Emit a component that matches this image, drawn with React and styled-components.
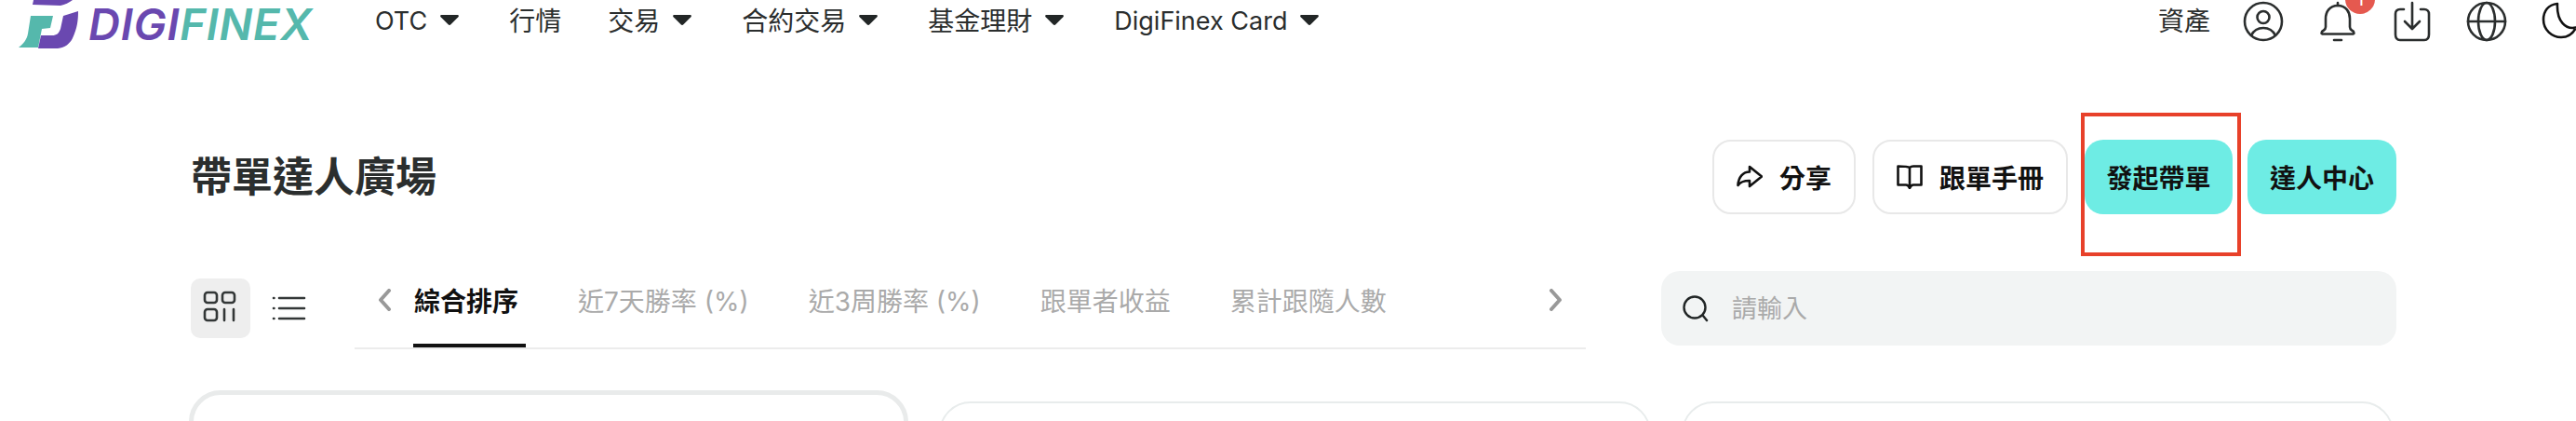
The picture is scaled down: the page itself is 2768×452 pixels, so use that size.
import React from "react";
import styled, { createGlobalStyle } from "styled-components";

const GlobalStyle = createGlobalStyle`
  html, body {
    margin: 0;
    height: 452px;
    overflow: hidden;
    background: #fff;
  }
  * { box-sizing: border-box; }
  body {
    font-family: Inter, "Noto Sans CJK TC", sans-serif;
    color: #2b2e2e;
  }
`;

const Page = styled.div`
  width: 2768px;
  height: 452px;
  overflow: hidden;
`;

const Header = styled.header`
  display: flex;
  align-items: center;
  height: 46px;
  padding-left: 20px;
`;

const Logo = styled.div`
  display: flex;
  align-items: flex-start;
  width: 383px;
  height: 46px;
`;

const LogoMark = styled.svg`
  width: 64px;
  height: 52px;
  flex: none;
`;

const LogoText = styled.span`
  margin: 3px 0 0 11px;
  font-size: 47px;
  line-height: 46px;
  font-weight: 600;
  font-style: italic;
  letter-spacing: 0.8px;
  color: #55b8ac;

  b {
    font-weight: inherit;
    color: #6a48b0;
  }
`;

const Nav = styled.nav`
  display: flex;
  align-items: center;
  gap: 54px;
`;

const NavItem = styled.a`
  display: flex;
  align-items: center;
  gap: 14px;
  font-size: ${(p) => (p.$latin ? 27 : 28)}px;
  line-height: 46px;
  margin-right: ${(p) => (p.$plain ? -4 : 0)}px;
  color: #2b2e2e;
`;

const Caret = styled.svg`
  width: 20px;
  height: 11px;
  fill: #222626;
  margin-top: -3px;
`;

const Actions = styled.div`
  display: flex;
  align-items: center;
  gap: 36px;
  margin-left: auto;
`;

const AssetLink = styled.a`
  font-size: 28px;
  line-height: 46px;
  margin-right: -1px;
  color: #2b2e2e;
`;

const IconSlot = styled.div`
  position: relative;
  flex: none;
  width: ${(p) => p.$width || 44}px;
  height: 44px;
`;

const ToolIcon = styled.svg`
  display: block;
  width: 100%;
  height: 44px;
  fill: none;
  stroke: ${(p) => p.$stroke || "#2b2e2e"};
  stroke-width: 2.6;
  stroke-linecap: round;
  stroke-linejoin: round;
`;

const Badge = styled.span`
  position: absolute;
  left: 30px;
  top: -18px;
  width: 32px;
  height: 32px;
  border-radius: 50%;
  background: #e5594f;
  color: #fff;
  font-size: 20px;
  line-height: 32px;
  text-align: center;
`;

const Content = styled.main`
  padding: 0 193px 0 207px;
`;

const TitleRow = styled.div`
  display: flex;
  align-items: center;
  justify-content: space-between;
  margin-top: 104px;
  height: 80px;
`;

const Title = styled.h1`
  margin: 0 0 0 -2px;
  font-size: 44px;
  line-height: 60px;
  font-weight: 700;
  color: #2b2e2e;
`;

const ButtonRow = styled.div`
  display: flex;
  gap: 18px;
`;

const Button = styled.button`
  display: flex;
  align-items: center;
  justify-content: center;
  gap: 18px;
  height: 80px;
  width: ${(p) => (p.$width ? `${p.$width}px` : "auto")};
  padding: ${(p) => (p.$width ? "0" : "0 24px")};
  border: ${(p) => (p.$primary ? "0" : "2px solid #e8e8e8")};
  border-radius: 20px;
  background: ${(p) => (p.$primary ? "#6eece4" : "#fff")};
  font-family: inherit;
  font-size: 28px;
  font-weight: 600;
  color: #111;
`;

const ButtonIcon = styled.svg`
  width: 28px;
  height: 26px;
  flex: none;
  fill: none;
  stroke: #111;
  stroke-width: 2.6;
  stroke-linejoin: round;
  stroke-linecap: round;
`;

const Highlighted = styled.div`
  position: relative;
  margin-right: -2px;
`;

const HighlightFrame = styled.div`
  position: absolute;
  top: -29px;
  bottom: -45px;
  left: -4px;
  right: -9px;
  border: 4px solid #e8412a;
`;

const Toolbar = styled.div`
  display: flex;
  align-items: flex-start;
  margin-top: 61px;
  height: 84px;
`;

const ViewSwitch = styled.div`
  display: flex;
  align-items: center;
  gap: 19px;
  margin: 8px 0 0 -2px;
  width: 176px;
  flex: none;
`;

const ViewButton = styled.div`
  display: flex;
  align-items: center;
  justify-content: center;
  width: ${(p) => (p.$active ? 64 : 44)}px;
  height: 64px;
  border-radius: 10px;
  background: ${(p) => (p.$active ? "#eeeeee" : "transparent")};
`;

const ViewIcon = styled.svg`
  width: 44px;
  height: 44px;
  fill: none;
  stroke: #333737;
  stroke-width: 2.6;
  stroke-linecap: round;
`;

const TabStrip = styled.div`
  display: flex;
  align-items: center;
  width: 1323px;
  height: 84px;
  padding: 0 24px 20px 24px;
  border-bottom: 2px solid #ececec;
  flex: none;
`;

const Tabs = styled.div`
  display: flex;
  align-items: center;
  align-self: stretch;
  gap: 64px;
  flex: 1;
  margin-left: 24px;
`;

const Tab = styled.a`
  position: relative;
  display: flex;
  align-items: center;
  align-self: stretch;
  font-size: 28px;
  white-space: nowrap;
  font-weight: ${(p) => (p.$active ? 600 : 400)};
  color: ${(p) => (p.$active ? "#111" : "#aaaaaa")};

  ${(p) =>
    p.$active &&
    `&::after {
      content: "";
      position: absolute;
      left: -1px;
      right: -8px;
      bottom: -20px;
      height: 4px;
      background: #111;
    }`}
`;

const Chevron = styled.svg`
  width: 16px;
  height: 24px;
  flex: none;
  fill: none;
  stroke: #999;
  stroke-width: 4;
  stroke-linecap: round;
  stroke-linejoin: round;
`;

const SearchBox = styled.label`
  display: flex;
  align-items: center;
  gap: 24px;
  width: 790px;
  height: 80px;
  margin-left: 81px;
  padding-left: 22px;
  border-radius: 20px;
  background: #f2f4f4;
  flex: none;
`;

const SearchIcon = styled.svg`
  width: 30px;
  height: 30px;
  flex: none;
  fill: none;
  stroke: #222626;
  stroke-width: 2.4;
  stroke-linecap: round;
`;

const SearchInput = styled.input`
  flex: 1;
  border: 0;
  outline: 0;
  background: transparent;
  font-family: inherit;
  font-size: 27px;
  padding: 0;
  color: #2b2e2e;

  &::placeholder {
    color: #aaaaaa;
    opacity: 1;
  }
`;

const CardRow = styled.div`
  display: flex;
  align-items: flex-start;
  gap: 33px;
  margin: 44px 0 0 -4px;
`;

const Card = styled.article`
  flex: none;
  height: 200px;
  width: ${(p) => (p.$raised ? 773 : 765)}px;
  margin-top: ${(p) => (p.$raised ? 0 : 12)}px;
  border: ${(p) => (p.$raised ? "5px solid #e9ebeb" : "2px solid #e8ecec")};
  border-radius: 34px;
  background: #fff;
`;

const navItems = [
  { label: "OTC", caret: true, latin: true },
  { label: "行情" },
  { label: "交易", caret: true },
  { label: "合約交易", caret: true },
  { label: "基金理財", caret: true },
  { label: "DigiFinex Card", caret: true, latin: true },
];

const tabs = ["綜合排序", "近7天勝率 (%)", "近3周勝率 (%)", "跟單者收益", "累計跟隨人數"];

function App() {
  return (
    <Page>
      <GlobalStyle />
      <Header>
        <Logo>
          <LogoMark viewBox="20 0 64 52">
            <path fill="#55b8ac" d="M20 51 C26 46 29 42 30 36 L33 17 H57 L54 30 L45 31 L41 51 Z" />
            <path fill="#6a48b0" d="M36 0 H78 C74 3 70 5 65 6 L35 5 Z" />
            <path fill="#6a48b0" d="M84 12 C84 22 83 30 78 41 C75 47 70 51 62 52 H41 L44 38 H56 C61 38 63 36 65 31 L68 17 Z" />
          </LogoMark>
          <LogoText>
            <b>DIGI</b>FINEX
          </LogoText>
        </Logo>
        <Nav>
          {navItems.map((item) => (
            <NavItem key={item.label} $latin={item.latin} $plain={!item.caret}>
              {item.label}
              {item.caret && (
                <Caret viewBox="0 0 20 11">
                  <path d="M1.5 0 H18.5 C19.8 0 20.3 1.2 19.4 2.2 L11.4 10.3 C10.6 11.1 9.4 11.1 8.6 10.3 L0.6 2.2 C-0.3 1.2 0.2 0 1.5 0 Z" />
                </Caret>
              )}
            </NavItem>
          ))}
        </Nav>
        <Actions>
          <AssetLink>資產</AssetLink>
          <IconSlot>
            <ToolIcon viewBox="0 0 44 44">
              <circle cx="22" cy="22" r="20" />
              <circle cx="22" cy="17.5" r="6.5" />
              <path d="M9 37 C12 31 17 29 22 29 C27 29 32 31 35 37" />
            </ToolIcon>
          </IconSlot>
          <IconSlot>
            <ToolIcon viewBox="0 0 44 44">
              <path d="M22 5 C13 5 9 12 9 19 V28 C9 31 7 31 5 33 C4 35 5 35.5 7 35.5 H37 C39 35.5 40 35 39 33 C37 31 35 31 35 28 V19 C35 12 31 5 22 5 Z" />
              <path d="M22 2 V5 M18 42 H26" />
            </ToolIcon>
            <Badge>1</Badge>
          </IconSlot>
          <IconSlot>
            <ToolIcon viewBox="0 0 44 44">
              <path d="M13 9 H9 C5.5 9 4 11 4 14 V36 C4 40 6 42 9 42 H35 C38 42 40 40 40 36 V14 C40 11 38 9 35 9 H31" />
              <path d="M22 2 V29 M14 22 L22 30 L30 22" />
            </ToolIcon>
          </IconSlot>
          <IconSlot>
            <ToolIcon viewBox="0 0 44 44">
              <circle cx="22" cy="22" r="20" />
              <ellipse cx="22" cy="22" rx="9" ry="20" />
              <path d="M2 22 H42" />
            </ToolIcon>
          </IconSlot>
          <IconSlot $width={38}>
            <ToolIcon viewBox="0 0 38 44" $stroke="#111">
              <path d="M18 3 C8 4 3 11 3 20 C3 31 12 39 22 39 C29 39 35 35 38 28.5 C27 31 17 22 18 3 Z" />
            </ToolIcon>
          </IconSlot>
        </Actions>
      </Header>

      <Content>
        <TitleRow>
          <Title>帶單達人廣場</Title>
          <ButtonRow>
            <Button>
              <ButtonIcon viewBox="0 0 28 26">
                <path d="M14 2 L27 12.5 L14 23 V17 C8 17 4 18 1.5 22 C2 13 7 7.5 14 7.5 Z" />
              </ButtonIcon>
              分享
            </Button>
            <Button>
              <ButtonIcon viewBox="0 0 28 26">
                <path d="M14 3 C12 1.5 9 1.5 1.5 1.5 V21.5 H10 C12 21.5 13 22.5 14 25 C15 22.5 16 21.5 18 21.5 H26.5 V1.5 H18 C16 1.5 15 2 14 3 Z M14 3 V24" />
              </ButtonIcon>
              跟單手冊
            </Button>
            <Highlighted>
              <Button $primary $width={159}>發起帶單</Button>
              <HighlightFrame />
            </Highlighted>
            <Button $primary>達人中心</Button>
          </ButtonRow>
        </TitleRow>

        <Toolbar>
          <ViewSwitch>
            <ViewButton $active>
              <ViewIcon viewBox="0 0 44 44">
                <rect x="5" y="5" width="13" height="11" rx="3" />
                <rect x="24" y="5" width="13" height="11" rx="3" />
                <rect x="5" y="23" width="13" height="12" rx="3" />
                <path d="M26 23 V35 M36 23 V35" />
              </ViewIcon>
            </ViewButton>
            <ViewButton>
              <ViewIcon viewBox="0 0 44 44">
                <path d="M6 11 H6.5 M6 22 H6.5 M6 33 H6.5 M12 11 H39 M12 22 H39 M12 33 H39" />
              </ViewIcon>
            </ViewButton>
          </ViewSwitch>
          <TabStrip>
            <Chevron viewBox="0 0 16 24">
              <path d="M13 2 L4 12 L13 22" />
            </Chevron>
            <Tabs>
              {tabs.map((tab, i) => (
                <Tab key={tab} $active={i === 0}>
                  {tab}
                </Tab>
              ))}
            </Tabs>
            <Chevron viewBox="0 0 16 24">
              <path d="M3 2 L12 12 L3 22" />
            </Chevron>
          </TabStrip>
          <SearchBox>
            <SearchIcon viewBox="0 0 30 30">
              <circle cx="14" cy="14" r="11.5" />
              <path d="M23 23 L27 28" />
            </SearchIcon>
            <SearchInput placeholder="請輸入" />
          </SearchBox>
        </Toolbar>

        <CardRow>
          <Card $raised />
          <Card />
          <Card />
        </CardRow>
      </Content>
    </Page>
  );
}

export default App;
